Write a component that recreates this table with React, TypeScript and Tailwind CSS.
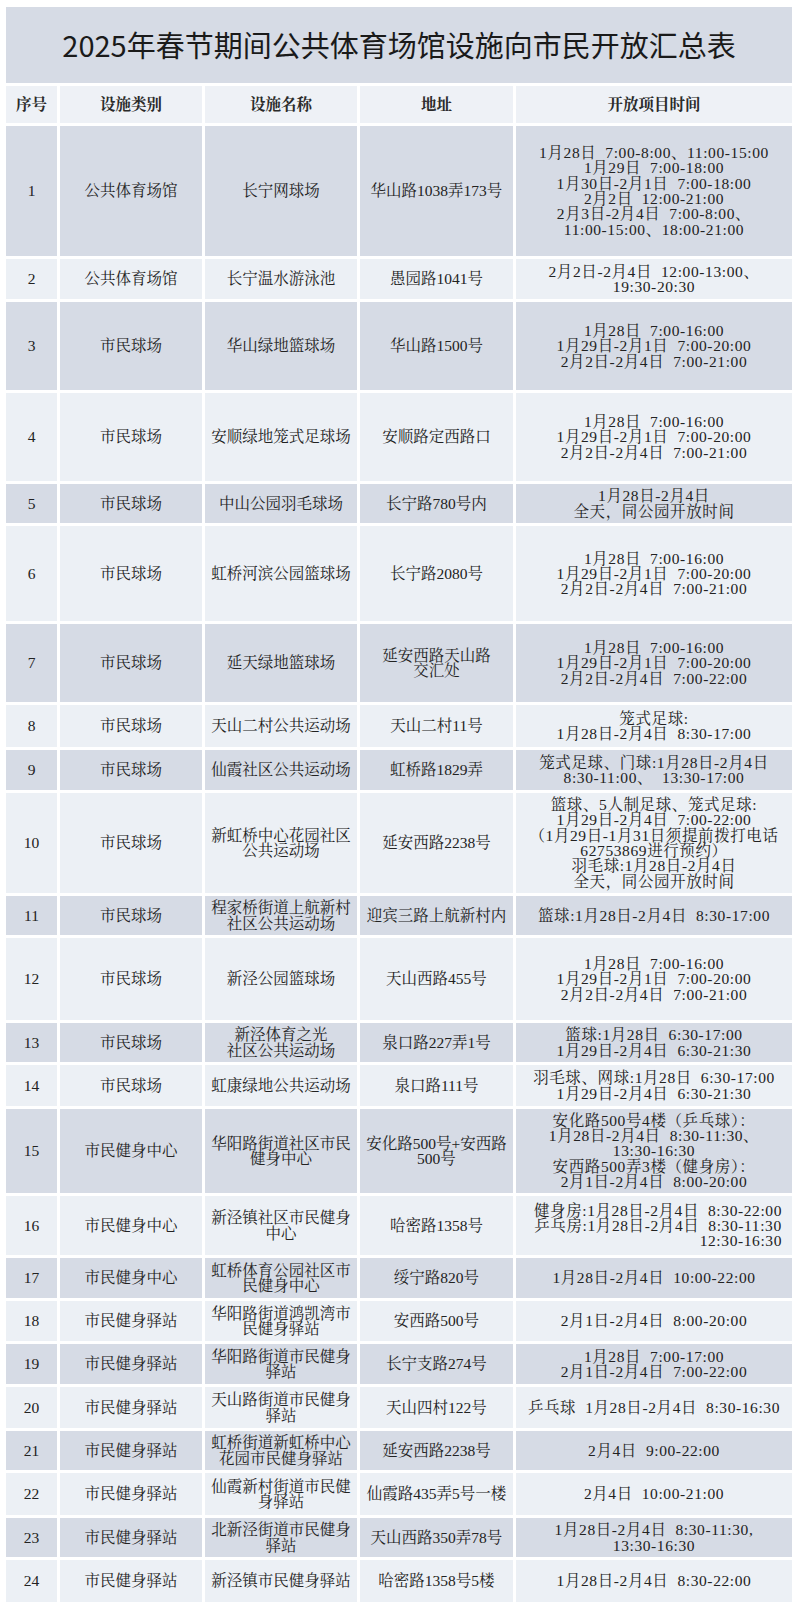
const T = ["1月28日  7:00-16:00", "1月29日-2月1日  7:00-20:00", "2月2日-2月4日  7:00-21:00"];

type Row = {
  n: number;
  cat: string;
  name: string[];
  addr: string[];
  time: string[];
  h: string;
  tail?: string;
};

const rows: Row[] = [
  {
    n: 1,
    cat: "公共体育场馆",
    name: ["长宁网球场"],
    addr: ["华山路1038弄173号"],
    time: [
      "1月28日  7:00-8:00、11:00-15:00",
      "1月29日  7:00-18:00",
      "1月30日-2月1日  7:00-18:00",
      "2月2日  12:00-21:00",
      "2月3日-2月4日  7:00-8:00、",
      "11:00-15:00、18:00-21:00",
    ],
    h: "h-[130px]",
  },
  { n: 2, cat: "公共体育场馆", name: ["长宁温水游泳池"], addr: ["愚园路1041号"], time: ["2月2日-2月4日  12:00-13:00、", "19:30-20:30"], h: "h-[40px]" },
  { n: 3, cat: "市民球场", name: ["华山绿地篮球场"], addr: ["华山路1500号"], time: T, h: "h-[88px]" },
  { n: 4, cat: "市民球场", name: ["安顺绿地笼式足球场"], addr: ["安顺路定西路口"], time: T, h: "h-[88px]" },
  { n: 5, cat: "市民球场", name: ["中山公园羽毛球场"], addr: ["长宁路780号内"], time: ["1月28日-2月4日", "全天，同公园开放时间"], h: "h-[39px]" },
  { n: 6, cat: "市民球场", name: ["虹桥河滨公园篮球场"], addr: ["长宁路2080号"], time: T, h: "h-[95px]" },
  {
    n: 7,
    cat: "市民球场",
    name: ["延天绿地篮球场"],
    addr: ["延安西路天山路", "交汇处"],
    time: ["1月28日  7:00-16:00", "1月29日-2月1日  7:00-20:00", "2月2日-2月4日  7:00-22:00"],
    h: "h-[78px]",
  },
  { n: 8, cat: "市民球场", name: ["天山二村公共运动场"], addr: ["天山二村11号"], time: ["笼式足球:", "1月28日-2月4日  8:30-17:00"], h: "h-[42px]" },
  { n: 9, cat: "市民球场", name: ["仙霞社区公共运动场"], addr: ["虹桥路1829弄"], time: ["笼式足球、门球:1月28日-2月4日", "8:30-11:00、  13:30-17:00"], h: "h-[40px]" },
  {
    n: 10,
    cat: "市民球场",
    name: ["新虹桥中心花园社区", "公共运动场"],
    addr: ["延安西路2238号"],
    time: [
      "篮球、5人制足球、笼式足球:",
      "1月29日-2月4日  7:00-22:00",
      "（1月29日-1月31日须提前拨打电话",
      "62753869进行预约）",
      "羽毛球:1月28日-2月4日",
      "全天，同公园开放时间",
    ],
    h: "h-[100px]",
  },
  { n: 11, cat: "市民球场", name: ["程家桥街道上航新村", "社区公共运动场"], addr: ["迎宾三路上航新村内"], time: ["篮球:1月28日-2月4日  8:30-17:00"], h: "h-[39px]" },
  { n: 12, cat: "市民球场", name: ["新泾公园篮球场"], addr: ["天山西路455号"], time: T, h: "h-[82px]" },
  { n: 13, cat: "市民球场", name: ["新泾体育之光", "社区公共运动场"], addr: ["泉口路227弄1号"], time: ["篮球:1月28日  6:30-17:00", "1月29日-2月4日  6:30-21:30"], h: "h-[39px]" },
  { n: 14, cat: "市民球场", name: ["虹康绿地公共运动场"], addr: ["泉口路111号"], time: ["羽毛球、网球:1月28日  6:30-17:00", "1月29日-2月4日  6:30-21:30"], h: "h-[41px]" },
  {
    n: 15,
    cat: "市民健身中心",
    name: ["华阳路街道社区市民", "健身中心"],
    addr: ["安化路500号+安西路", "500号"],
    time: ["安化路500号4楼（乒乓球）：", "1月28日-2月4日  8:30-11:30、", "13:30-16:30", "安西路500弄3楼（健身房）：", "2月1日-2月4日  8:00-20:00"],
    h: "h-[84px]",
  },
  {
    n: 16,
    cat: "市民健身中心",
    name: ["新泾镇社区市民健身", "中心"],
    addr: ["哈密路1358号"],
    time: ["健身房:1月28日-2月4日  8:30-22:00", "乒乓房:1月28日-2月4日  8:30-11:30"],
    tail: "12:30-16:30",
    h: "h-[59px]",
  },
  { n: 17, cat: "市民健身中心", name: ["虹桥体育公园社区市", "民健身中心"], addr: ["绥宁路820号"], time: ["1月28日-2月4日  10:00-22:00"], h: "h-[40px]" },
  { n: 18, cat: "市民健身驿站", name: ["华阳路街道鸿凯湾市", "民健身驿站"], addr: ["安西路500号"], time: ["2月1日-2月4日  8:00-20:00"], h: "h-[40px]" },
  { n: 19, cat: "市民健身驿站", name: ["华阳路街道市民健身", "驿站"], addr: ["长宁支路274号"], time: ["1月28日  7:00-17:00", "2月1日-2月4日  7:00-22:00"], h: "h-[40px]" },
  { n: 20, cat: "市民健身驿站", name: ["天山路街道市民健身", "驿站"], addr: ["天山四村122号"], time: ["乒乓球  1月28日-2月4日  8:30-16:30"], h: "h-[41px]" },
  { n: 21, cat: "市民健身驿站", name: ["虹桥街道新虹桥中心", "花园市民健身驿站"], addr: ["延安西路2238号"], time: ["2月4日  9:00-22:00"], h: "h-[39px]" },
  { n: 22, cat: "市民健身驿站", name: ["仙霞新村街道市民健", "身驿站"], addr: ["仙霞路435弄5号一楼"], time: ["2月4日  10:00-21:00"], h: "h-[42px]" },
  { n: 23, cat: "市民健身驿站", name: ["北新泾街道市民健身", "驿站"], addr: ["天山西路350弄78号"], time: ["1月28日-2月4日  8:30-11:30,", "13:30-16:30"], h: "h-[39px]" },
  { n: 24, cat: "市民健身驿站", name: ["新泾镇市民健身驿站"], addr: ["哈密路1358号5楼"], time: ["1月28日-2月4日  8:30-22:00"], h: "h-[42px]" },
];

const serif = 'font-["Liberation_Serif","Noto_Serif_CJK_SC","Noto_Sans_CJK_SC",serif]';

const Lines = ({ lines }: { lines: string[] }) => (
  <div className="flex flex-col items-center">
    {lines.map((l, i) => (
      <span key={i} className="whitespace-pre">
        {l}
      </span>
    ))}
  </div>
);

export default function App() {
  return (
    <div className="w-[800px] h-[1616px] bg-white pt-[7px] pl-[6px]">
      <div className="w-[786px] flex flex-col gap-[3px]">
        {/* title */}
        <div className="h-[76px] bg-[#d6dbe5] flex items-center justify-center text-[29px] text-[#1a1a1a] font-['Noto_Sans_CJK_SC',sans-serif]">
          2025年春节期间公共体育场馆设施向市民开放汇总表
        </div>

        {/* header */}
        <div
          className={`h-[37px] grid grid-cols-[51px_142px_152px_153px_1fr] gap-x-[3px] text-[15.5px] font-bold text-[#2a2a2a] ${serif}`}
        >
          {["序号", "设施类别", "设施名称", "地址", "开放项目时间"].map((h) => (
            <div key={h} className="bg-[#eef1f6] flex items-center justify-center">
              {h}
            </div>
          ))}
        </div>

        {rows.map((r, i) => {
          const bg = i % 2 === 0 ? "bg-[#d6dbe5]" : "bg-[#ecf0f5]";
          return (
            <div
              key={r.n}
              className={`${r.h} grid grid-cols-[51px_142px_152px_153px_1fr] gap-x-[3px] text-[15.5px] leading-[15.3px] text-[#222] ${serif}`}
            >
              <div className={`${bg} flex items-center justify-center`}>{r.n}</div>
              <div className={`${bg} flex items-center justify-center`}>{r.cat}</div>
              <div className={`${bg} flex items-center justify-center`}>
                <Lines lines={r.name} />
              </div>
              <div className={`${bg} flex items-center justify-center`}>
                <Lines lines={r.addr} />
              </div>
              <div className={`${bg} flex items-center justify-center tracking-[0.6px]`}>
                {r.tail ? (
                  <div className="flex flex-col items-end pl-[8px]">
                    {r.time.map((l, j) => (
                      <span key={j} className="whitespace-pre self-center">
                        {l}
                      </span>
                    ))}
                    <span className="whitespace-pre">{r.tail}</span>
                  </div>
                ) : (
                  <Lines lines={r.time} />
                )}
              </div>
            </div>
          );
        })}
      </div>
    </div>
  );
}
